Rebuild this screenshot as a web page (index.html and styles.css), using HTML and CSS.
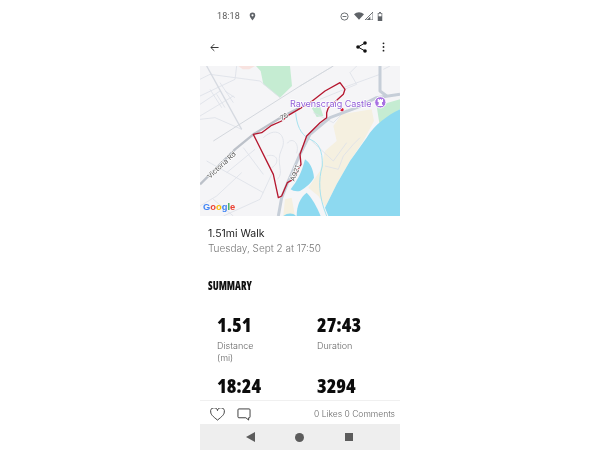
FILE: index.html
```html
<!DOCTYPE html>
<html lang="en">
<head>
<meta charset="utf-8">
<title>1.51mi Walk</title>
<link rel="stylesheet" href="styles.css">
</head>
<body>
<main class="phone">
  <div class="status">
    <div class="status-left">
      <span class="time">18:18</span>
      <svg class="ic-pin" viewBox="0 0 8 10"><path d="M4 0.5a3.2 3.2 0 0 0-3.2 3.2C.8 6 4 9.5 4 9.5S7.200 6 7.200 3.700A3.200 3.200 0 0 0 4 .5z" fill="#5f6368"/><circle cx="4" cy="3.700" r="1.200" fill="#fff"/></svg>
    </div>
    <div class="status-right">
      <svg class="ic-dnd" viewBox="0 0 10 10"><circle cx="5" cy="5" r="4" fill="none" stroke="#5f6368" stroke-width="1"/><path d="M2.800 5h4.400" stroke="#5f6368" stroke-width="1"/></svg>
      <svg class="ic-wifi" viewBox="0 0 12 9"><path d="M0 2.500C3.500-.8 8.500-.8 12 2.500L6 9z" fill="#5f6368"/></svg>
      <svg class="ic-signal" viewBox="0 0 9 9"><path d="M0 9L9 0v9z" fill="none" stroke="#5f6368" stroke-width="1"/><path d="M2 9L6 5v4z" fill="#5f6368"/></svg>
      <svg class="ic-batt" viewBox="0 0 6 10"><path d="M2 0h2v1h1.500v9H.5V1H2z" fill="#5f6368"/><rect x="1.300" y="1.800" width="3.400" height="3" fill="#fff"/></svg>
    </div>
  </div>
  <div class="toolbar">
    <svg class="ic-back" viewBox="0 0 10 10"><path d="M9.500 5H1M4.800 1.200L1 5l3.800 3.800" fill="none" stroke="#222" stroke-width="1"/></svg>
    <div class="toolbar-actions">
      <svg class="ic-share" viewBox="0 0 11 12"><path d="M9 2L2 6l7 4" fill="none" stroke="#111" stroke-width="1"/><circle cx="9" cy="2" r="1.800" fill="#111"/><circle cx="2" cy="6" r="1.800" fill="#111"/><circle cx="9" cy="10" r="1.800" fill="#111"/></svg>
      <svg class="ic-more" viewBox="0 0 3 11"><circle cx="1.500" cy="1.500" r="1" fill="#222"/><circle cx="1.500" cy="5.500" r="1" fill="#222"/><circle cx="1.500" cy="9.500" r="1" fill="#222"/></svg>
    </div>
  </div>
  <svg class="map" viewBox="0 0 600 450">
    <rect width="600" height="450" fill="#f5f5f7"/>
    <path d="M168 0H270L276 60 240 95 190 55 182 15z" fill="#c5ecd2"/>
    <path d="M115 0H165L148 10H128z" fill="#f8e3e0"/>
    <path d="M335 125L360 120 370 150 350 153z" fill="#c5ecd2"/>
    <path d="M425 145L515 130 522 165 490 225 450 285 410 355 376 422 355 390 325 365 360 315 375 255 410 225 400 180z" fill="#f5f0e0"/>
    <path d="M250 450L255 400 275 395 285 450z" fill="#f5f0e0"/>
    <path d="M530 120L600 100V130L538 172z" fill="#c5ecd2"/>
    <path d="M600 130C560 150 525 175 500 215L450 285 410 355 375 425 385 450H600z" fill="#8dd9f0"/>
    <path d="M315 280C330 290 340 310 342 335 335 350 320 362 300 375 288 378 278 374 272 370 292 345 305 320 315 280z" fill="#8dd9f0"/>
    <path d="M320 380C335 395 350 420 362 450H290C290 420 300 395 320 380z" fill="#8dd9f0"/>
    <path d="M250 450C262 440 280 440 288 450z" fill="#8dd9f0"/>
    <g fill="none" stroke="#dde1e8" stroke-width="2.500">
      <path d="M0 40L30 25 105 35 180 45 240 95M0 90L105 40 110 0M0 115L60 75M0 150L100 90M30 70L65 125M60 50L100 110M0 160L45 155 125 190"/>
      <path d="M75 75L105 95M75 125L50 85M20 285L190 380M125 320L50 390 0 420M165 250L80 320M190 325L130 245M70 450L180 400 215 325M100 450L40 400"/>
      <path d="M190 215C235 175 262 215 245 250 225 290 255 320 232 340M262 232C275 212 300 230 290 262M200 270C232 260 242 290 215 305"/>
      <path d="M450 20L470 55 360 100M430 65L540 25M300 60L400 0M470 0L450 20M570 0L550 10M340 140L400 170 440 130M335 225L400 285 440 230"/>
      <path d="M375 300L415 310 430 270 460 235 480 215"/>
    </g>
    <path d="M287 140C290 175 300 205 330 220 355 230 368 250 367 300 355 340 355 390 380 450" fill="none" stroke="#a6e2ef" stroke-width="3"/>
    <g fill="none" stroke-linejoin="round">
      <path d="M20 0L125 190" stroke="#d6dae1" stroke-width="4"/>
      <path d="M40 225L300 60 400 0" stroke="#d3d7dd" stroke-width="3"/>
      <path d="M0 355L105 250 160 205 250 150 300 125" stroke="#bcc1c9" stroke-width="7"/>
      <path d="M235 450L245 395 265 345 300 265 330 205 390 155 470 125 530 95 600 85" stroke="#c6ced8" stroke-width="9"/>
      <path d="M540 0V75L560 90" stroke="#c6ced8" stroke-width="9"/>
    </g>
    <path class="route" d="M160 205L185 200 215 178 245 165 270 145 330 110 375 75 420 50 435 70 430 85 385 125 380 140 380 155 360 170 320 210 300 265 303 295 280 340 262 350 245 390 235 395 220 325 205 295 170 225Z"/>
    <circle cx="426" cy="131" r="5" fill="#d9102b"/>
    <text class="map-place" x="270" y="122">Ravenscraig Castle</text>
    <circle cx="541" cy="109" r="17" fill="#a871e3" stroke="#fff" stroke-width="3"/>
    <path d="M533 99h4v3h2v-3h4v3h2v-3h4v9h-3v8h3v4h-16v-4h3v-8h-3z" fill="#fff"/>
    <text class="map-road" transform="translate(30 339) rotate(-43)">Victoria Rd</text>
    <text class="map-road" transform="translate(283 347) rotate(-68)">A921</text>
    <text class="map-road" transform="translate(246 164) rotate(-32)">76</text>
    <text class="map-google" x="9" y="433"><tspan fill="#4285f4">G</tspan><tspan fill="#ea4335">o</tspan><tspan fill="#fbbc05">o</tspan><tspan fill="#4285f4">g</tspan><tspan fill="#34a853">l</tspan><tspan fill="#ea4335">e</tspan></text>
  </svg>
  <section class="title-block">
    <h1 class="title">1.51mi Walk</h1>
    <p class="date">Tuesday, Sept 2 at 17:50</p>
  </section>
  <h2 class="summary">SUMMARY</h2>
  <section class="stats">
    <div class="stat">
      <div class="value">1.51</div>
      <div class="label">Distance<br>(mi)</div>
    </div>
    <div class="stat">
      <div class="value">27:43</div>
      <div class="label">Duration</div>
    </div>
    <div class="stat stat-low">
      <div class="value">18:24</div>
    </div>
    <div class="stat stat-low">
      <div class="value">3294</div>
    </div>
  </section>
  <div class="social">
    <svg class="ic-heart" viewBox="0 0 16 14"><path d="M8 13C3 9 .7 7 .7 4.300A3.500 3.500 0 0 1 8 2.800 3.500 3.500 0 0 1 15.300 4.300C15.300 7 13 9 8 13z" fill="none" stroke="#333" stroke-width="1"/></svg>
    <svg class="ic-comment" viewBox="0 0 15 14"><path d="M2 1h11a1 1 0 0 1 1 1v7.500a1 1 0 0 1-1 1h-.5v2.500l-3-2.500H2a1 1 0 0 1-1-1V2a1 1 0 0 1 1-1z" fill="none" stroke="#333" stroke-width="1"/></svg>
    <span class="counts">0 Likes 0 Comments</span>
  </div>
  <nav class="navbar">
    <svg class="nav-back" viewBox="0 0 9 10"><path d="M9 0v10L0 5z" fill="#5c5c5c"/></svg>
    <svg class="nav-home" viewBox="0 0 9 9"><circle cx="4.500" cy="4.500" r="4.500" fill="#5c5c5c"/></svg>
    <svg class="nav-recent" viewBox="0 0 8 8"><rect width="8" height="8" fill="#5c5c5c"/></svg>
  </nav>
</main>
</body>
</html>
```

FILE: styles.css
```css
* { box-sizing: border-box; }
html, body { margin: 0; padding: 0; background: #fff; }
body { display: flex; justify-content: center; font-family: "Inter", "Liberation Sans", sans-serif; }
.phone { width: 200px; height: 450px; display: flex; flex-direction: column; overflow: hidden; background: #fff; filter: blur(.3px); }
.status { height: 33px; flex: none; display: flex; justify-content: space-between; align-items: center; padding: 0 17px 1px 17px; }
.status-left { display: flex; align-items: center; gap: 9px; }
.time { font-family: "Roboto", sans-serif; font-size: 9px; color: #5a5a5a; letter-spacing: .1px; }
.ic-pin { width: 7px; height: 9px; }
.status-right { display: flex; align-items: center; gap: 2px; }
.ic-dnd { width: 9px; height: 9px; margin-right: 3px; }
.ic-wifi { width: 10px; height: 8px; }
.ic-signal { width: 8px; height: 8px; margin-left: -1px; }
.ic-batt { width: 6px; height: 9px; margin-left: 2px; }
.toolbar { height: 33px; flex: none; display: flex; justify-content: space-between; align-items: center; padding: 0 15px 5px 10px; }
.ic-back { width: 9px; height: 9px; }
.toolbar-actions { display: flex; align-items: center; gap: 15px; }
.ic-share { width: 11px; height: 12px; }
.ic-more { width: 3px; height: 10px; }
.map { width: 200px; height: 150px; flex: none; display: block; }
.route { fill: none; stroke: #b5172f; stroke-width: 4px; stroke-linejoin: round; }
.map-place { font-family: "Inter", "Liberation Sans", sans-serif; font-size: 27px; fill: #9360d8; stroke: #fff; stroke-width: 4px; paint-order: stroke; }
.map-road { font-family: "Inter", "Liberation Sans", sans-serif; font-size: 21px; fill: #555; stroke: #fff; stroke-width: 4px; paint-order: stroke; }
.map-google { font-family: "Liberation Sans", sans-serif; font-size: 28px; font-weight: 700; }
.title-block { padding: 10px 8px 0; }
.title { margin: 0; font-size: 10.500px; line-height: 15px; font-weight: 400; color: #222; }
.date { margin: 0; font-size: 10px; line-height: 15px; font-weight: 300; color: #777; }
.summary { margin: 23px 8px 0; font-family: "Open Sans", sans-serif; font-stretch: 75%; font-size: 12px; line-height: 14px; font-weight: 800; color: #111; transform: scaleX(.85); transform-origin: left center; }
.stats { margin-top: 20px; padding-left: 17px; display: grid; grid-template-columns: 100px 83px; flex: 1; min-height: 0; align-content: start; }
.stat-low { margin-top: 10px; }
.value { font-family: "Open Sans", sans-serif; font-stretch: 75%; font-size: 19.500px; line-height: 24px; font-weight: 800; color: #0c0c0c; }
.label { margin-top: 3px; font-size: 9px; line-height: 12px; font-weight: 300; color: #666; height: 24px; }
.social { height: 24px; flex: none; display: flex; align-items: center; padding: 3px 5px 0 10px; border-top: 1px solid #f0f0f0; }
.ic-heart { width: 15px; height: 13px; }
.ic-comment { width: 14px; height: 13px; margin-left: 12px; }
.counts { margin-left: auto; font-size: 8.500px; font-weight: 300; color: #666; }
.navbar { height: 26px; flex: none; background: #eeeeee; display: flex; align-items: center; padding-left: 46px; }
.nav-back { width: 9px; height: 10px; }
.nav-home { width: 9px; height: 9px; margin-left: 40px; }
.nav-recent { width: 8px; height: 8px; margin-left: 41px; }
```
